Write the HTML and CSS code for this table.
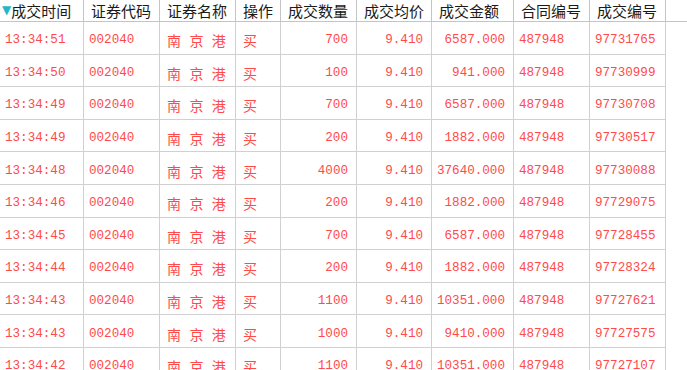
FILE: index.html
```html
<!DOCTYPE html>
<html lang="zh-CN">
<head>
<meta charset="utf-8">
<link rel="stylesheet" href="styles.css">
</head>
<body>
<div class="table">
  <div class="row head">
    <div class="c"><span class="tri">▼</span>成交时间</div>
    <div class="c">证券代码</div>
    <div class="c">证券名称</div>
    <div class="c">操作</div>
    <div class="c">成交数量</div>
    <div class="c">成交均价</div>
    <div class="c">成交金额</div>
    <div class="c">合同编号</div>
    <div class="c">成交编号</div>
    <div class="c end"></div>
  </div>
  <div class="row"><div class="c">13:34:51</div><div class="c">002040</div><div class="c name">南 京 港</div><div class="c name">买</div><div class="c r">700</div><div class="c r">9.410</div><div class="c r">6587.000</div><div class="c">487948</div><div class="c">97731765</div></div>
  <div class="row"><div class="c">13:34:50</div><div class="c">002040</div><div class="c name">南 京 港</div><div class="c name">买</div><div class="c r">100</div><div class="c r">9.410</div><div class="c r">941.000</div><div class="c">487948</div><div class="c">97730999</div></div>
  <div class="row"><div class="c">13:34:49</div><div class="c">002040</div><div class="c name">南 京 港</div><div class="c name">买</div><div class="c r">700</div><div class="c r">9.410</div><div class="c r">6587.000</div><div class="c">487948</div><div class="c">97730708</div></div>
  <div class="row"><div class="c">13:34:49</div><div class="c">002040</div><div class="c name">南 京 港</div><div class="c name">买</div><div class="c r">200</div><div class="c r">9.410</div><div class="c r">1882.000</div><div class="c">487948</div><div class="c">97730517</div></div>
  <div class="row"><div class="c">13:34:48</div><div class="c">002040</div><div class="c name">南 京 港</div><div class="c name">买</div><div class="c r">4000</div><div class="c r">9.410</div><div class="c r">37640.000</div><div class="c">487948</div><div class="c">97730088</div></div>
  <div class="row"><div class="c">13:34:46</div><div class="c">002040</div><div class="c name">南 京 港</div><div class="c name">买</div><div class="c r">200</div><div class="c r">9.410</div><div class="c r">1882.000</div><div class="c">487948</div><div class="c">97729075</div></div>
  <div class="row"><div class="c">13:34:45</div><div class="c">002040</div><div class="c name">南 京 港</div><div class="c name">买</div><div class="c r">700</div><div class="c r">9.410</div><div class="c r">6587.000</div><div class="c">487948</div><div class="c">97728455</div></div>
  <div class="row"><div class="c">13:34:44</div><div class="c">002040</div><div class="c name">南 京 港</div><div class="c name">买</div><div class="c r">200</div><div class="c r">9.410</div><div class="c r">1882.000</div><div class="c">487948</div><div class="c">97728324</div></div>
  <div class="row"><div class="c">13:34:43</div><div class="c">002040</div><div class="c name">南 京 港</div><div class="c name">买</div><div class="c r">1100</div><div class="c r">9.410</div><div class="c r">10351.000</div><div class="c">487948</div><div class="c">97727621</div></div>
  <div class="row"><div class="c">13:34:43</div><div class="c">002040</div><div class="c name">南 京 港</div><div class="c name">买</div><div class="c r">1000</div><div class="c r">9.410</div><div class="c r">9410.000</div><div class="c">487948</div><div class="c">97727575</div></div>
  <div class="row"><div class="c">13:34:42</div><div class="c">002040</div><div class="c name">南 京 港</div><div class="c name">买</div><div class="c r">1100</div><div class="c r">9.410</div><div class="c r">10351.000</div><div class="c">487948</div><div class="c">97727107</div></div>
</div>
</body>
</html>
```

FILE: styles.css
```css
html, body {
  margin: 0;
  padding: 0;
  background: #ffffff;
  overflow: hidden;
}
.table {
  width: 687px;
  height: 370px;
  overflow: hidden;
}
.row {
  display: grid;
  grid-template-columns: 84px 76px 76px 45px 76px 75px 82px 76px 76px;
  height: 32.6px;
}
.row.head {
  grid-template-columns: 84px 76px 76px 45px 76px 75px 82px 76px 76px 1fr;
  height: 22px;
  background: #ffffff;
}
.c {
  box-sizing: border-box;
  border-right: 1px solid #d0d0d0;
  border-bottom: 1px solid #d0d0d0;
  display: flex;
  align-items: center;
  padding: 5px 0 0 5px;
  font-family: "Liberation Mono", "Noto Sans CJK SC", monospace;
  font-size: 12.6px;
  color: #ff4a4a;
  white-space: nowrap;
  overflow: hidden;
}
.c.name {
  font-family: "Liberation Mono", "Noto Sans CJK SC", monospace;
  font-size: 14px;
  padding-left: 7px;
}
.c.r {
  justify-content: flex-end;
  padding-left: 0;
  padding-right: 8px;
}
.head .c {
  padding: 0 0 1px 7px;
  font-family: "Noto Sans CJK SC", sans-serif;
  font-size: 15px;
  color: #1a1a1a;
  border-right-color: #c4c4c4;
  border-bottom-color: #c4c4c4;
}
.head .c:first-child {
  padding-left: 2px;
}
.head .c.end {
  border-right: none;
}
.tri {
  color: #1fb8c8;
  font-family: "DejaVu Sans", sans-serif;
  font-size: 12px;
  margin-right: 0;
}
```
